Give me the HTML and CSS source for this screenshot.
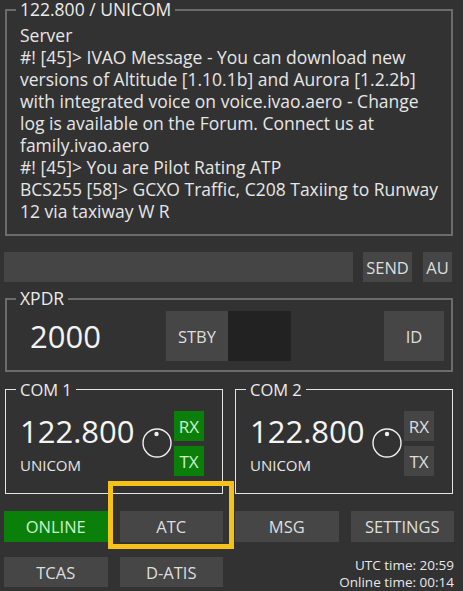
FILE: index.html
```html
<!DOCTYPE html>
<html lang="en">
<head>
  <meta charset="UTF-8">
  <title>Pilot Client</title>
  <link rel="stylesheet" href="styles.css">
</head>
<body>
  <div class="panel">

    <fieldset class="log">
      <legend>122.800 / UNICOM</legend>
      <div class="messages">
        <p>Server</p>
        <p>#! [45]&gt; IVAO Message - You can download new versions of Altitude [1.10.1b] and Aurora [1.2.2b] with integrated voice on voice.ivao.aero - Change log is available on the Forum. Connect us at family.ivao.aero</p>
        <p>#! [45]&gt; You are Pilot Rating ATP</p>
        <p>BCS255 [58]&gt; GCXO Traffic, C208 Taxiing to Runway 12 via taxiway W R</p>
      </div>
    </fieldset>

    <div class="send-row">
      <input type="text" class="chat-input">
      <button class="btn btn-send">SEND</button>
      <button class="btn btn-au">AU</button>
    </div>

    <fieldset class="xpdr">
      <legend>XPDR</legend>
      <div class="xpdr-row">
        <span class="squawk">2000</span>
        <button class="btn btn-mode">STBY</button>
        <div class="mode-light"></div>
        <button class="btn btn-ident">ID</button>
      </div>
    </fieldset>

    <div class="com-row">
      <fieldset class="com">
        <legend>COM 1</legend>
        <div class="com-body">
          <div class="com-freq">
            <div class="freq">122.800</div>
            <div class="station">UNICOM</div>
          </div>
          <svg class="knob" width="30" height="30" viewBox="0 0 30 30">
            <circle cx="15" cy="15" r="14" fill="none" stroke="#f0f0f0" stroke-width="1.4"/>
            <circle cx="14.5" cy="6" r="2.2" fill="#f0f0f0"/>
          </svg>
          <div class="com-keys">
            <button class="key key-on">RX</button>
            <button class="key key-on">TX</button>
          </div>
        </div>
      </fieldset>

      <fieldset class="com">
        <legend>COM 2</legend>
        <div class="com-body">
          <div class="com-freq">
            <div class="freq">122.800</div>
            <div class="station">UNICOM</div>
          </div>
          <svg class="knob" width="30" height="30" viewBox="0 0 30 30">
            <circle cx="15" cy="15" r="14" fill="none" stroke="#f0f0f0" stroke-width="1.4"/>
            <circle cx="15" cy="6" r="2.2" fill="#f0f0f0"/>
          </svg>
          <div class="com-keys">
            <button class="key">RX</button>
            <button class="key">TX</button>
          </div>
        </div>
      </fieldset>
    </div>

    <div class="menu">
      <button class="btn btn-online">ONLINE</button>
      <button class="btn">ATC</button>
      <button class="btn">MSG</button>
      <button class="btn">SETTINGS</button>
    </div>

    <div class="menu menu-low">
      <button class="btn">TCAS</button>
      <button class="btn">D-ATIS</button>
      <div class="times">
        UTC time: 20:59<br>
        Online time: 00:14
      </div>
    </div>

    <div class="highlight"></div>
  </div>
</body>
</html>
```

FILE: styles.css
```css
body {
  margin: 0;
  background-color: #323232;
  color: #e6e6e6;
  font-family: "Open Sans", Arial, sans-serif;
  font-size: 16.5px;
}
.panel {
  position: relative;
  width: 450px;
  margin-left: 4px;
}
fieldset {
  margin: 0 1px;
  min-width: 0;
}
legend {
  padding: 0 4px;
  margin-left: -4px;
  font-size: 17.5px;
  line-height: 19px;
  color: #ececec;
}
.log {
  border: 2px solid #6b6b6b;
  padding: 5px 6px 12px 13px;
}
.messages p {
  margin: 0;
  font-size: 17.5px;
  line-height: 22px;
}
.send-row {
  display: flex;
  gap: 10px;
  margin-top: 16px;
  width: 448px;
  height: 30px;
}
.chat-input {
  flex: 1;
  border: none;
  background-color: #454545;
  color: #e6e6e6;
  padding: 0 8px;
  font-family: inherit;
  font-size: 16px;
}
.btn {
  border: none;
  background-color: #464646;
  color: #dedede;
  font-family: inherit;
  font-size: 16.5px;
  padding: 0;
  cursor: pointer;
}
.btn-send {
  width: 49px;
}
.btn-au {
  width: 29px;
  margin-left: 1px;
}
.xpdr {
  margin-top: 7px;
  border: 2px solid #6b6b6b;
  padding: 3px 7px 9px 13px;
}
.xpdr-row {
  display: flex;
  align-items: center;
  height: 50px;
}
.squawk {
  font-size: 31px;
  color: #f2f2f2;
  margin-left: 10px;
  width: 136px;
}
.btn-mode {
  width: 62px;
  height: 50px;
}
.mode-light {
  width: 63px;
  height: 50px;
  background-color: #222222;
}
.btn-ident {
  width: 60px;
  height: 50px;
  margin-left: auto;
}
.com-row {
  display: flex;
  gap: 12px;
  margin-top: 8px;
}
.com {
  flex: 1;
  border: 1px solid #e4e4e4;
  padding: 12px 17px 17px 14px;
}
.com legend {
  font-size: 16.5px;
}
.com + .com {
  margin-left: -1px;
}
.com-body {
  display: flex;
  align-items: center;
}
.com-freq {
  width: 116px;
}
.freq {
  font-size: 31px;
  line-height: 34px;
  color: #f4f4f4;
}
.station {
  margin-top: 8px;
  font-size: 15px;
  line-height: 18px;
}
.knob {
  margin-left: 6px;
  margin-top: -2px;
}
.com-keys {
  display: flex;
  flex-direction: column;
  gap: 5px;
  margin-left: 2px;
}
.key {
  width: 30px;
  height: 30px;
  border: none;
  padding: 0;
  background-color: #454545;
  color: #dedede;
  font-family: inherit;
  font-size: 17px;
}
.key-on {
  background-color: #0a800a;
  color: #cdf2cd;
}
.menu {
  display: grid;
  grid-template-columns: repeat(4, 1fr);
  column-gap: 12px;
  margin-top: 17px;
}
.menu .btn {
  height: 31px;
}
.menu-low {
  margin-top: 15px;
}
.menu-low .btn {
  height: 30px;
}
.btn-online {
  background-color: #0a800a;
  color: #cdf2cd;
}
.times {
  grid-column: 3 / 5;
  text-align: right;
  font-size: 13.5px;
  line-height: 17px;
  color: #e8e8e8;
}
.highlight {
  position: absolute;
  left: 104px;
  top: 481px;
  width: 116px;
  height: 58px;
  border: 5px solid #f5c21b;
}
```
